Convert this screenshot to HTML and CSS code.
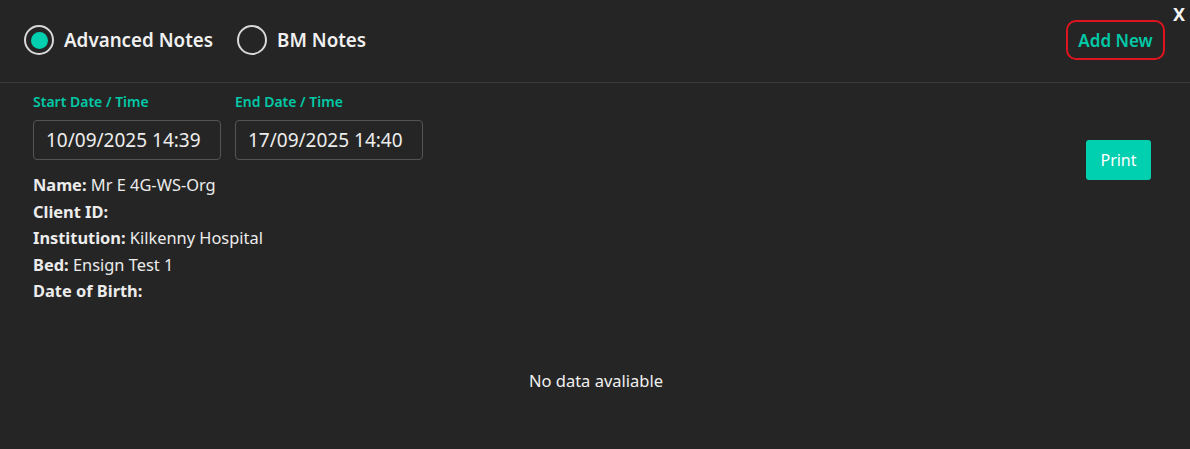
FILE: index.html
```html
<!DOCTYPE html>
<html>
<head>
<meta charset="utf-8">
<link rel="stylesheet" href="styles.css">
</head>
<body>
<div class="panel">
  <span class="close">X</span>
  <header class="header">
    <div class="tabs">
      <label class="radio">
        <span class="circle checked"><span class="dot"></span></span>
        <span class="radio-label">Advanced Notes</span>
      </label>
      <label class="radio">
        <span class="circle"></span>
        <span class="radio-label">BM Notes</span>
      </label>
    </div>
    <button class="add-new">Add New</button>
  </header>
  <main class="content">
    <div class="top-row">
      <div class="left">
        <div class="dates">
          <div class="field">
            <div class="field-label">Start Date / Time</div>
            <div class="input">10/09/2025 14:39</div>
          </div>
          <div class="field">
            <div class="field-label">End Date / Time</div>
            <div class="input">17/09/2025 14:40</div>
          </div>
        </div>
        <div class="info">
          <div><b>Name:</b> Mr E 4G-WS-Org</div>
          <div><b>Client ID:</b></div>
          <div><b>Institution:</b> Kilkenny Hospital</div>
          <div><b>Bed:</b> Ensign Test 1</div>
          <div><b>Date of Birth:</b></div>
        </div>
      </div>
      <button class="print">Print</button>
    </div>
  </main>
  <div class="empty">No data avaliable</div>
</div>
</body>
</html>
```

FILE: styles.css
```css
* { box-sizing: border-box; }
html, body {
  margin: 0;
  padding: 0;
  background: #252525;
  color: #ececec;
  font-family: "Noto Sans", "Open Sans", sans-serif;
}
.panel {
  position: relative;
  width: 1190px;
  height: 449px;
}
.close {
  position: absolute;
  right: 5px;
  top: 2px;
  font-weight: 700;
  font-size: 18px;
  color: #f2f2f2;
}
.header {
  height: 83px;
  border-bottom: 1px solid #3a3a3a;
  display: flex;
  align-items: center;
  justify-content: space-between;
  padding: 0 25px 2px 24px;
}
.tabs {
  display: flex;
  align-items: center;
  gap: 24px;
}
.radio {
  display: flex;
  align-items: center;
  gap: 10px;
}
.circle {
  width: 30px;
  height: 30px;
  border: 2px solid #d8d8d8;
  border-radius: 50%;
  display: flex;
  align-items: center;
  justify-content: center;
}
.dot {
  width: 17px;
  height: 17px;
  border-radius: 50%;
  background: #00cfb0;
}
.radio-label {
  font-size: 18.8px;
  font-weight: 600;
  color: #f0f0f0;
}
.add-new {
  font-family: inherit;
  background: transparent;
  border: 2px solid #e0141e;
  border-radius: 10px;
  color: #00c9a7;
  font-size: 17px;
  font-weight: 600;
  width: 99px;
  height: 40px;
  padding: 0;
}
.content {
  padding: 10px 39px 0 33px;
}
.top-row {
  display: flex;
  justify-content: space-between;
  align-items: flex-start;
}
.dates {
  display: flex;
  gap: 14px;
}
.field-label {
  color: #00c9a7;
  font-size: 14px;
  font-weight: 600;
  height: 18px;
  line-height: 18px;
  margin-bottom: 9px;
}
.input {
  width: 188px;
  height: 40px;
  border: 1px solid #555;
  border-radius: 4px;
  font-size: 19px;
  padding: 0 0 0 12px;
  display: flex;
  align-items: center;
  color: #ededed;
}
.info {
  margin-top: 12px;
  font-size: 16.4px;
  line-height: 26.5px;
  color: #ececec;
}
.info b { font-weight: 700; }
.print {
  font-family: inherit;
  margin-top: 47px;
  width: 65px;
  height: 40px;
  background: #00cfb0;
  color: #fff;
  border: none;
  border-radius: 3px;
  font-size: 16px;
}
.empty {
  text-align: center;
  font-size: 16.5px;
  margin-top: 64px;
  padding-left: 2px;
  color: #f0f0f0;
}
```
